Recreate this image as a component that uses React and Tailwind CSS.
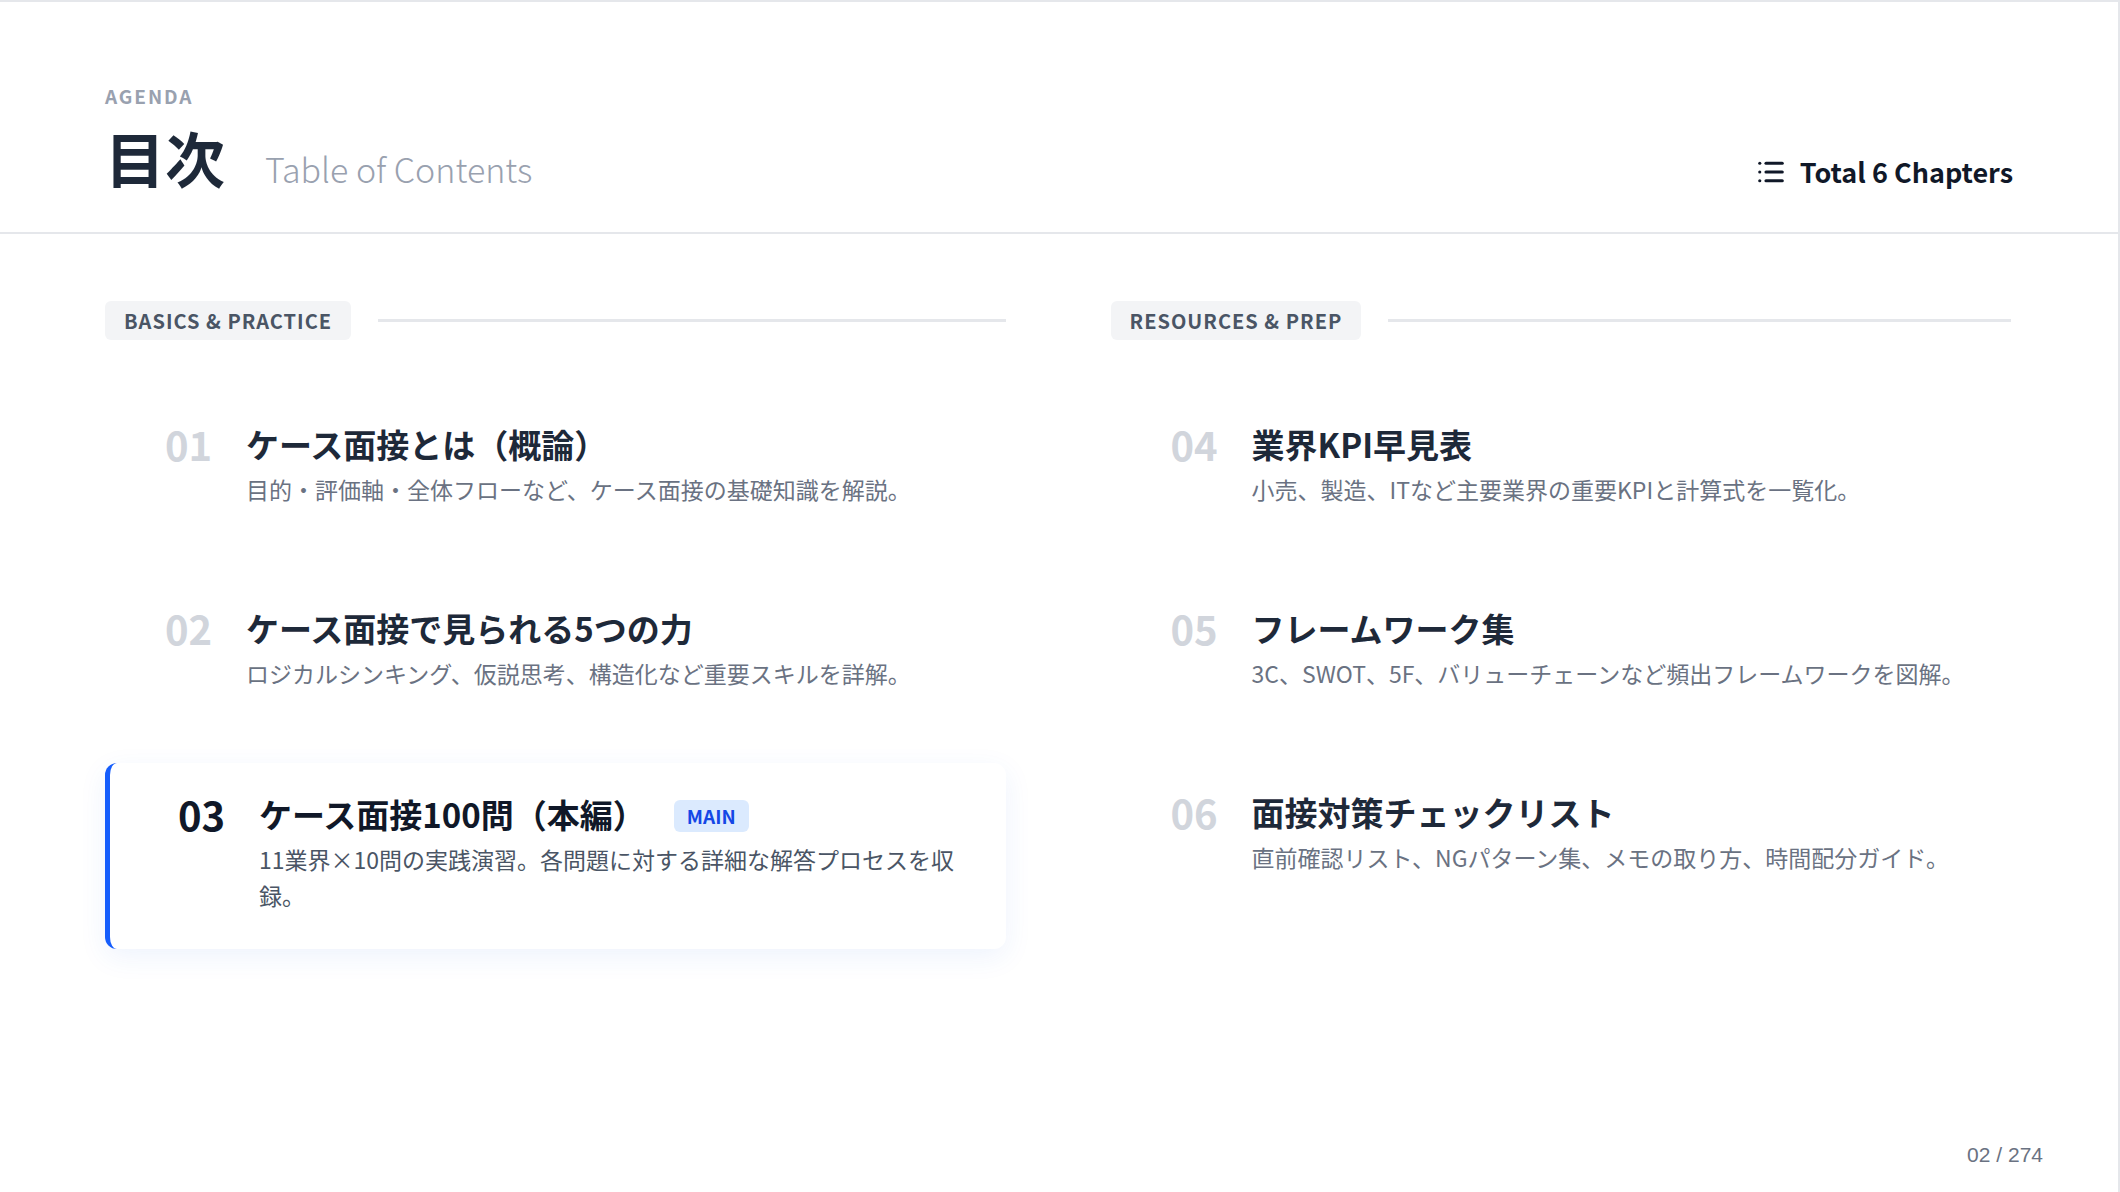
import { List } from "lucide-react";

const jp = { fontFamily: '"Noto Sans CJK JP", "Noto Sans", sans-serif' };

const left = [
  { n: "01", t: "ケース面接とは（概論）", d: "目的・評価軸・全体フローなど、ケース面接の基礎知識を解説。" },
  { n: "02", t: "ケース面接で見られる5つの力", d: "ロジカルシンキング、仮説思考、構造化など重要スキルを詳解。" },
];
const right = [
  { n: "04", t: "業界KPI早見表", d: "小売、製造、ITなど主要業界の重要KPIと計算式を一覧化。" },
  { n: "05", t: "フレームワーク集", d: "3C、SWOT、5F、バリューチェーンなど頻出フレームワークを図解。" },
  { n: "06", t: "面接対策チェックリスト", d: "直前確認リスト、NGパターン集、メモの取り方、時間配分ガイド。" },
];

function Label({ text }) {
  return (
    <div className="flex items-center gap-[27px]">
      <div className="bg-gray-100 rounded-md px-[19px] h-[39px] flex items-center text-[20px] font-bold tracking-wider text-gray-600 whitespace-nowrap">
        {text}
      </div>
      <div className="flex-1 h-[3px] bg-gray-200" />
    </div>
  );
}

function Item({ n, t, d }) {
  return (
    <div className="flex gap-[34px] pl-[60px] pr-[45px] py-[28px]">
      <div className="text-[40px] leading-[42px] font-bold text-gray-300 w-[47px]">{n}</div>
      <div>
        <div className="text-[33px] leading-[42px] font-bold text-gray-800">{t}</div>
        <div className="text-[23px] leading-[36px] text-gray-500 mt-[6px]">{d}</div>
      </div>
    </div>
  );
}

export default function App() {
  return (
    <div style={jp} className="w-[2120px] h-[1192px] bg-white border-t-2 border-r-2 border-gray-200 flex flex-col">
      <div className="h-[232px] border-b-2 border-gray-200 px-[105px] pt-[84px] flex items-end justify-between pb-[38px]">
        <div>
          <div className="text-[19px] leading-[24px] font-bold tracking-widest text-gray-400">AGENDA</div>
          <div className="flex items-baseline gap-[40px] mt-[14px]">
            <div className="text-[60px] leading-[70px] font-bold text-gray-800">目次</div>
            <div className="text-[34px] text-gray-400 font-light">Table of Contents</div>
          </div>
        </div>
        <div className="flex items-center gap-[14px] text-[27px] font-semibold text-gray-900 mb-[2px]">
          <List size={30} strokeWidth={2.5} />
          Total 6 Chapters
        </div>
      </div>
      <div className="grid grid-cols-2 gap-[105px] px-[105px] pr-[107px] pt-[67px]">
        <div className="flex flex-col">
          <Label text="BASICS & PRACTICE" />
          <div className="flex flex-col gap-[44px] mt-[55px]">
            {left.map((it) => <Item key={it.n} {...it} />)}
            <div className="flex gap-[34px] pl-[68px] pr-[45px] pt-[30px] pb-[36px] rounded-xl border-l-[5px] border-blue-600 bg-white shadow-[0_8px_28px_rgba(37,99,235,0.08)]">
              <div className="text-[40px] leading-[42px] font-bold text-gray-900 w-[47px]">03</div>
              <div>
                <div className="flex items-center gap-[28px]">
                  <div className="text-[33px] leading-[42px] font-bold text-gray-900">ケース面接100問（本編）</div>
                  <div className="bg-blue-100 text-blue-700 text-[19px] font-bold rounded-md px-[13px] h-[32px] flex items-center mt-[4px]">MAIN</div>
                </div>
                <div className="text-[23px] leading-[36px] text-gray-600 mt-[6px]">11業界×10問の実践演習。各問題に対する詳細な解答プロセスを収録。</div>
              </div>
            </div>
          </div>
        </div>
        <div className="flex flex-col">
          <Label text="RESOURCES & PREP" />
          <div className="flex flex-col gap-[44px] mt-[55px]">
            {right.map((it) => <Item key={it.n} {...it} />)}
          </div>
        </div>
      </div>
      <div className="mt-auto flex justify-end pr-[75px] pb-[22px] text-[21px] text-gray-500" style={{ fontFamily: '"Liberation Sans", Arial, sans-serif' }}>
        02 / 274
      </div>
    </div>
  );
}
